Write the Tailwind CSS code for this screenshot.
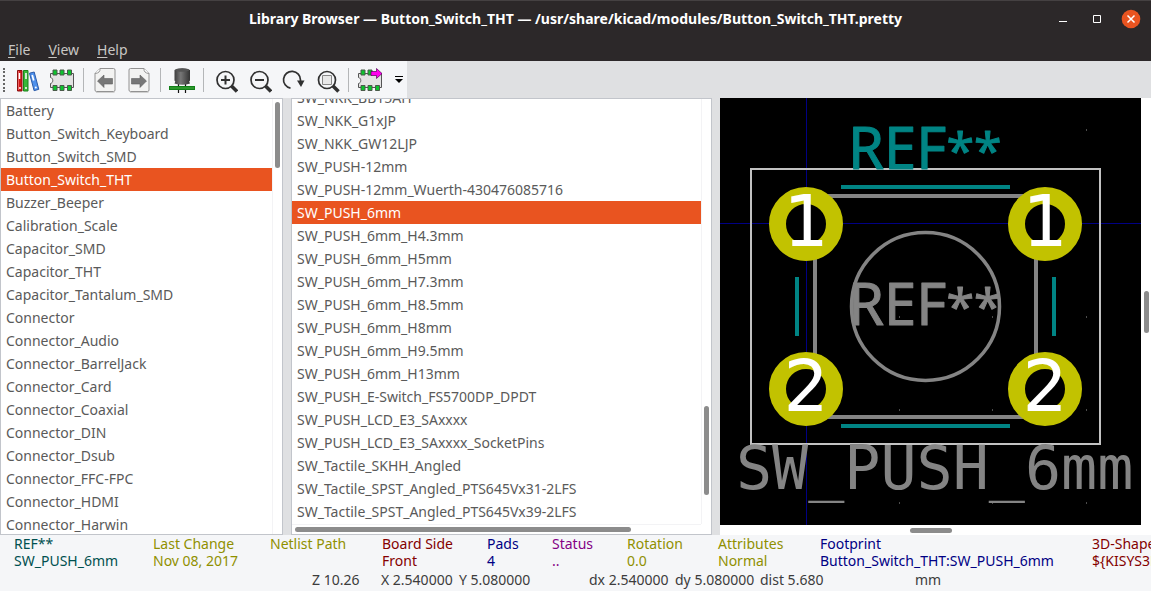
<!DOCTYPE html>
<html lang="en">
<head>
<meta charset="utf-8">
<title>Library Browser</title>
<script src="https://cdn.jsdelivr.net/npm/@tailwindcss/browser@4"></script>
</head>
<body class="flex h-screen flex-col overflow-hidden bg-[#f5f6f8] font-['Noto_Sans',sans-serif] text-sm text-[#5a5a5a]">

<header class="bg-[#2c2829]">
  <div class="relative flex h-[38px] items-center justify-center border-t border-[#454142] pb-px">
    <h1 class="text-sm font-bold whitespace-nowrap text-white">Library Browser — Button_Switch_THT — /usr/share/kicad/modules/Button_Switch_THT.pretty</h1>
    <div class="absolute inset-y-0 right-[10px] flex items-center gap-[14px] pb-px">
      <button aria-label="Minimize" class="flex h-5 w-5 items-center justify-center"><svg class="h-5 w-5" viewBox="0 0 20 20"><path d="M6 12.500h8" stroke="#fff" fill="none"/></svg></button>
      <button aria-label="Maximize" class="flex h-5 w-5 items-center justify-center"><svg class="h-5 w-5" viewBox="0 0 20 20"><path d="M6.500 6.500h7v7h-7z" stroke="#fff" fill="none"/></svg></button>
      <button aria-label="Close" class="flex h-5 w-5 items-center justify-center"><svg class="h-5 w-5" viewBox="0 0 20 20"><circle cx="10" cy="10" r="9.300" fill="#e95420"/><path d="M6.500 6.500l7 7m0-7l-7 7" stroke="#fff" stroke-width="1.500" fill="none"/></svg></button>
    </div>
  </div>
  <nav class="flex h-[23px] items-center gap-[18px] px-2 text-[#c8c6c3]">
    <button><u class="underline-offset-2">F</u>ile</button>
    <button><u class="underline-offset-2">V</u>iew</button>
    <button><u class="underline-offset-2">H</u>elp</button>
  </nav>
</header>

<div class="flex h-[37px] shrink-0 bg-[#dfe0e2]">
  <div role="toolbar" aria-label="Browser tools" class="flex w-[407px] items-center bg-[#f5f6f8] pl-[3px] [&>*]:shrink-0 [&>button]:flex [&>button]:h-[34px] [&>button]:w-[34px] [&>button]:items-center [&>button]:justify-center">
    <div class="mr-[6px] h-6 w-[2px] border-l-2 border-dotted border-[#666]"></div>
    <button aria-label="Select library"><svg class="h-[26px] w-[26px]" viewBox="0 0 26 26">
      <path d="M2.500 3.500h4.500v20.500h-4.500z" fill="#d01818" stroke="#8c1010"/><path d="M3.500 4v19" stroke="#f06060"/><path d="M4.500 6v6" stroke="#fff" stroke-width="1.500"/><circle cx="5" cy="21" r="1" fill="#fff"/>
      <path d="M8.500 3.500h4.500v20.500h-4.500z" fill="#38b838" stroke="#1b851b"/><path d="M11 6v6" stroke="#fff" stroke-width="1.500"/><circle cx="11" cy="21" r="1" fill="#fff"/>
      <path d="M14.500 6.200l4.700-1.200 4.600 17.300-4.700 1.400z" fill="#4f91ec" stroke="#2c5ba8"/><path d="M17.200 8l1.500 5.500" stroke="#fff" stroke-width="1.700"/><circle cx="20.800" cy="20.500" r="1" fill="#fff"/></svg></button>
    <button aria-label="Select footprint"><svg class="h-[26px] w-[26px]" viewBox="0 0 26 26">
      <path d="M1.500 6.500h23v14h-23v-4c3-.5 3-5.500 0-6z" fill="#e3e3e3" stroke="#555"/>
      <g fill="#0bc42c" stroke="#4a5a4a"><path d="M4 3h4v5h-4zM11 3h4v5h-4zM18.500 3h4v5h-4zM4 18.500h4v5h-4zM11 18.500h4v5h-4zM18.500 18.500h4v5h-4z"/></g></svg></button>
    <div class="mx-1 h-6 w-px bg-[#b4b6b8]"></div>
    <button aria-label="Previous footprint"><svg class="h-[26px] w-[26px]" viewBox="0 0 26 26">
      <path d="M4 25.500h18.500" stroke="#d0d0d0"/><path d="M8 1.500h13.500q1.500 0 1.500 1.500v20q0 1.500-1.500 1.500h-17q-1.500 0-1.500-1.500v-16.500z" fill="#f3f3f2" stroke="#929292"/><path d="M8 1.500q.5 4.500-5 5" fill="#fff" stroke="#929292"/>
      <path d="M5.500 14l6.500-6v3.500h8.500v5.500H12v3.500z" fill="#777" stroke="#606060" stroke-width=".6"/></svg></button>
    <button aria-label="Next footprint"><svg class="h-[26px] w-[26px]" viewBox="0 0 26 26">
      <path d="M4 25.500h18.500" stroke="#d0d0d0"/><path d="M18 1.500h-13.500q-1.500 0-1.500 1.500v20q0 1.500 1.500 1.500h17q1.500 0 1.500-1.500v-16.500z" fill="#f3f3f2" stroke="#929292"/><path d="M18 1.500q-.5 4.500 5 5" fill="#fff" stroke="#929292"/>
      <path d="M20.500 14l-6.500-6v3.500h-8.500v5.500H14v3.500z" fill="#777" stroke="#606060" stroke-width=".6"/></svg></button>
    <div class="mx-1 h-6 w-px bg-[#b4b6b8]"></div>
    <button aria-label="3D viewer"><svg class="h-[26px] w-[26px]" viewBox="0 0 26 26">
      <defs><linearGradient id="can"><stop offset="0" stop-color="#3d3d3d"/><stop offset=".4" stop-color="#777"/><stop offset="1" stop-color="#333"/></linearGradient></defs>
      <path d="M9.500 16v10M16.500 16v10" stroke="#111" stroke-width="1.200"/><path d="M5.500 3q7.500-3.500 15.500 0v10.500l-.8 1 .8 2q-7.500 2.500-15.500 0l.8-2-.8-1z" fill="url(#can)"/><ellipse cx="13.200" cy="3" rx="7" ry="1.700" fill="#555"/>
      <path d="M0 19h26v4H0z" fill="#118018"/><path d="M1 21h24" stroke="#48ad40"/></svg></button>
    <div class="mx-1 h-6 w-px bg-[#b4b6b8]"></div>
    <button aria-label="Zoom in"><svg class="h-[26px] w-[26px]" viewBox="0 0 26 26" fill="none" stroke="#303030"><circle cx="13.500" cy="13" r="8.500" stroke-width="1.700"/><path d="M9 13h9M13.500 8.500v9" stroke-width="2"/><path d="M19.500 19l5.500 5.500" stroke-width="3.500"/></svg></button>
    <button aria-label="Zoom out"><svg class="h-[26px] w-[26px]" viewBox="0 0 26 26" fill="none" stroke="#303030"><circle cx="13.500" cy="13" r="8.500" stroke-width="1.700"/><path d="M9 13h9" stroke-width="2"/><path d="M19.500 19l5.500 5.500" stroke-width="3.500"/></svg></button>
    <button aria-label="Redraw view"><svg class="h-[26px] w-[26px]" viewBox="0 0 26 26" fill="none" stroke="#303030"><path d="M10.500 21.200a8.500 8.500 0 1 1 10-8.200v3" stroke-width="1.700"/><path d="M17 13.500h7.500l-3.500 6.500z" fill="#303030" stroke="none"/></svg></button>
    <button aria-label="Zoom to fit"><svg class="h-[26px] w-[26px]" viewBox="0 0 26 26" fill="none" stroke="#303030"><circle cx="13" cy="13" r="8.500" stroke-width="1.700"/><path d="M8.500 8.500h9v9h-9z" fill="#e8e8e8" stroke="#888"/><path d="M19 19l5.500 5.500" stroke-width="3.500"/></svg></button>
    <div class="mx-1 h-6 w-px bg-[#b4b6b8]"></div>
    <button aria-label="Insert footprint in board"><svg class="h-[26px] w-[26px]" viewBox="0 0 26 26">
      <path d="M1.500 6.500h23v14h-23v-4c3-.5 3-5.500 0-6z" fill="#e3e3e3" stroke="#555"/>
      <g fill="#0bc42c" stroke="#4a5a4a"><path d="M4 3h4v5h-4zM11 3h4v5h-4zM4 18.500h4v5h-4zM11 18.500h4v5h-4zM18.500 18.500h4v5h-4z"/></g>
      <path d="M14 4.500h5.500v-3l5.500 5-5.500 5v-3h-5.500z" fill="#f0e" stroke="#505" stroke-width=".7"/></svg></button>
    <button aria-label="More tools" class="!w-5 pl-1"><svg class="h-[10px] w-[10px]" viewBox="0 0 10 10"><path d="M1 1.500h8" stroke="#000"/><path d="M1 4h8l-4 4z"/></svg></button>
  </div>
</div>

<main class="flex min-h-0 flex-1 gap-2 bg-[#dfe0e2]">
  <section aria-label="Libraries" class="flex w-[283px] shrink-0 border border-[#c2c5cb] bg-white">
    <ul class="min-w-0 flex-1 overflow-hidden [&_button]:block [&_button]:h-[23px] [&_button]:w-full [&_button]:px-[5px] [&_button]:text-left [&_button]:whitespace-nowrap">
      <li><button>Battery</button></li>
      <li><button>Button_Switch_Keyboard</button></li>
      <li><button>Button_Switch_SMD</button></li>
      <li><button class="bg-[#e95420] text-white">Button_Switch_THT</button></li>
      <li><button>Buzzer_Beeper</button></li>
      <li><button>Calibration_Scale</button></li>
      <li><button>Capacitor_SMD</button></li>
      <li><button>Capacitor_THT</button></li>
      <li><button>Capacitor_Tantalum_SMD</button></li>
      <li><button>Connector</button></li>
      <li><button>Connector_Audio</button></li>
      <li><button>Connector_BarrelJack</button></li>
      <li><button>Connector_Card</button></li>
      <li><button>Connector_Coaxial</button></li>
      <li><button>Connector_DIN</button></li>
      <li><button>Connector_Dsub</button></li>
      <li><button>Connector_FFC-FPC</button></li>
      <li><button>Connector_HDMI</button></li>
      <li><button>Connector_Harwin</button></li>
    </ul>
    <div class="w-[10px] border-l border-[#f3f3f5] pt-[3px] pl-[2px]"><div class="h-[66px] w-[5px] rounded-full bg-[#8c8c8c]"></div></div>
  </section>

  <section aria-label="Footprints" class="flex w-[421px] shrink-0 flex-col border border-[#c2c5cb] bg-white">
    <div class="flex min-h-0 flex-1">
      <ul class="min-w-0 flex-1 overflow-hidden [&_button]:block [&_button]:h-[23px] [&_button]:w-full [&_button]:px-[5px] [&_button]:text-left [&_button]:whitespace-nowrap">
        <li class="-mt-[13px]"><button>SW_NKK_BB15AH</button></li>
        <li><button>SW_NKK_G1xJP</button></li>
        <li><button>SW_NKK_GW12LJP</button></li>
        <li><button>SW_PUSH-12mm</button></li>
        <li><button>SW_PUSH-12mm_Wuerth-430476085716</button></li>
        <li><button class="bg-[#e95420] text-white">SW_PUSH_6mm</button></li>
        <li><button>SW_PUSH_6mm_H4.3mm</button></li>
        <li><button>SW_PUSH_6mm_H5mm</button></li>
        <li><button>SW_PUSH_6mm_H7.3mm</button></li>
        <li><button>SW_PUSH_6mm_H8.5mm</button></li>
        <li><button>SW_PUSH_6mm_H8mm</button></li>
        <li><button>SW_PUSH_6mm_H9.5mm</button></li>
        <li><button>SW_PUSH_6mm_H13mm</button></li>
        <li><button>SW_PUSH_E-Switch_FS5700DP_DPDT</button></li>
        <li><button>SW_PUSH_LCD_E3_SAxxxx</button></li>
        <li><button>SW_PUSH_LCD_E3_SAxxxx_SocketPins</button></li>
        <li><button>SW_Tactile_SKHH_Angled</button></li>
        <li><button>SW_Tactile_SPST_Angled_PTS645Vx31-2LFS</button></li>
        <li><button>SW_Tactile_SPST_Angled_PTS645Vx39-2LFS</button></li>
      </ul>
      <div class="flex w-[10px] flex-col justify-end border-l border-[#f3f3f5] pb-[29px] pl-[2px]"><div class="h-[89px] w-[5px] rounded-full bg-[#8c8c8c]"></div></div>
    </div>
    <div class="mr-[10px] h-[10px] border-t border-[#f3f3f5] pt-[2px] pl-[3px]"><div class="h-[5px] w-[336px] rounded-full bg-[#8c8c8c]"></div></div>
  </section>

  <section aria-label="Footprint view" class="flex min-w-0 flex-1 flex-col bg-white">
    <div class="flex min-h-0 flex-1">
      <div class="min-w-0 flex-1 overflow-hidden bg-black">
        <svg class="h-full w-full" viewBox="720 98 421 427" preserveAspectRatio="xMinYMin slice" fill="none">
          <path d="M806.500 98v427M720 223.500h421" stroke="#000084"/>
          <path d="M751 169h349v275h-349z" stroke="#c2c2c2" stroke-width="2"/>
          <g stroke="#848484">
            <path d="M815 196h221v221h-221z" stroke-width="4"/>
            <circle cx="925.500" cy="306.500" r="74" stroke-width="3.500"/>
          </g>
          <path d="M841 187h169M841 426h169M797 277v59M1054 277v59" stroke="#008484" stroke-width="4"/>
          <g fill="#000" stroke="#c2c200" stroke-width="17">
            <circle cx="806" cy="224" r="28.500"/><circle cx="1045" cy="224" r="28.500"/>
            <circle cx="806" cy="389" r="28.500"/><circle cx="1045" cy="389" r="28.500"/>
          </g>
          <path d="M1086 130h1M899 317h1M992 317h1M1086 317h1M899 410h1M992 410h1M1086 410h1M899 503h1M992 503h1M1086 503h1" stroke="#999"/>
          <g class="font-['Noto_Sans',sans-serif] text-[58px]" stroke-linejoin="round">
            <text x="848" y="169" fill="#008484" stroke="#008484">REF<tspan class="text-[50px]">**</tspan></text>
            <text x="848" y="325" fill="#848484" stroke="#848484">REF<tspan class="text-[50px]">**</tspan></text>
          </g>
          <text x="736" y="489" fill="#848484" class="font-['DejaVu_Sans_Mono',monospace] text-[60px]">SW_PUSH_6mm</text>
          <g class="font-['DejaVu_Sans',sans-serif] text-[71px]" fill="#fff" text-anchor="middle">
            <text x="806" y="246">1</text><text x="1045" y="246">1</text>
            <text x="806" y="411">2</text><text x="1045" y="411">2</text>
          </g>
        </svg>
      </div>
      <div class="flex w-[10px] items-center justify-center"><div class="h-[42px] w-[5px] rounded-full bg-[#8c8c8c]"></div></div>
    </div>
    <div class="mr-[10px] flex h-[10px] items-center justify-center"><div class="h-[5px] w-[42px] rounded-full bg-[#8c8c8c]"></div></div>
  </section>
</main>

<footer class="shrink-0 overflow-hidden whitespace-nowrap">
  <dl class="flex pl-[14px] leading-[17px] [&>div]:shrink-0">
    <div class="w-[139px] text-[#005050]"><dt>REF**</dt><dd>SW_PUSH_6mm</dd></div>
    <div class="w-[117px] text-[#909000]"><dt>Last Change</dt><dd>Nov 08, 2017</dd></div>
    <div class="w-[112px] text-[#909000]"><dt>Netlist Path</dt></div>
    <div class="w-[105px] text-[#840000]"><dt>Board Side</dt><dd>Front</dd></div>
    <div class="w-[65px] text-[#000084]"><dt>Pads</dt><dd>4</dd></div>
    <div class="w-[75px] text-[#840084]"><dt>Status</dt><dd>..</dd></div>
    <div class="w-[91px] text-[#909000]"><dt>Rotation</dt><dd>0.0</dd></div>
    <div class="w-[102px] text-[#909000]"><dt>Attributes</dt><dd>Normal</dd></div>
    <div class="w-[272px] text-[#000084]"><dt>Footprint</dt><dd>Button_Switch_THT:SW_PUSH_6mm</dd></div>
    <div class="text-[#840000]"><dt>3D-Shape</dt><dd>${KISYS3DMOD}</dd></div>
  </dl>
  <div class="flex h-[22px] items-center pl-[312px] text-[#3c3c3c]">
    <span class="w-[69px]">Z 10.26</span>
    <span class="w-[78px]">X 2.540000</span>
    <span class="w-[130px]">Y 5.080000</span>
    <span class="w-[86px]">dx 2.540000</span>
    <span class="w-[85px]">dy 5.080000</span>
    <span class="w-[155px]">dist 5.680</span>
    <span>mm</span>
  </div>
</footer>
</body>
</html>
